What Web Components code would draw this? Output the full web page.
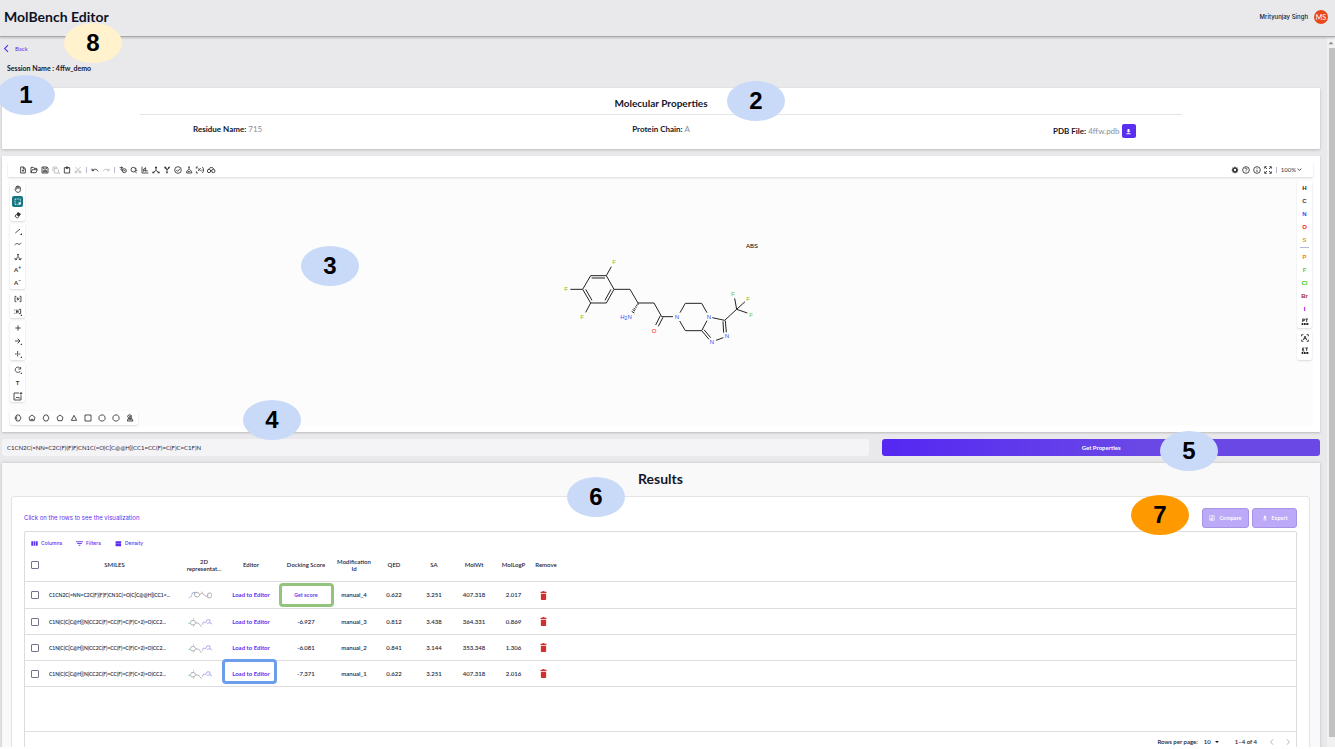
<!DOCTYPE html>
<html lang="en">
<head>
<meta charset="utf-8">
<title>MolBench Editor</title>
<style>
  html, body { margin: 0; height: 100%; }
  body { background: #fff; color: #14172b; font: 6px/8px Lato, "Open Sans", sans-serif; overflow: hidden; }
</style>
</head>
<body>
<mol-app></mol-app>
<script>
const ICONS = {
  back: '<path d="M16 3 7 12l9 9" stroke-width="3"/>',
  download: '<path class="f" d="M9 3h6v6h4l-7 7-7-7h4zM5 18h14v3H5z"/>',
  newdoc: '<path d="M5 3h9l5 5v13H5zM13 3v6h6M9 14h6M12 11v6"/>',
  open: '<path d="M3 20V4h7l2 3h8v4M3 20l4-9h15l-4 9z"/>',
  save: '<path d="M3 3h15l3 3v15H3zM8 4v5h8V4M7 20v-6h10v6M9 17h6"/>',
  copy: '<path d="M3 16V3h11v3M7 7h8l4 4v10H7z"/><path class="f" d="M24 19v5h-5z"/>',
  paste: '<path d="M4 5h16v16H4zM9 3h6v4H9z"/>',
  cut: '<path d="m4 3 14 14M20 3 6 17"/><circle cx="6" cy="18" r="3"/><circle cx="18" cy="18" r="3"/>',
  undo: '<path d="M3 8v6h6M3 14c5-6 14-6 18 2"/>',
  redo: '<path d="M21 8v6h-6M21 14C16 8 7 8 3 16"/>',
  layout: '<path d="M2 5h9M7 2l4 3-4 4M12 12h-6v-3"/><circle cx="16" cy="14" r="6"/><path d="M13 14h6"/>',
  clean: '<circle cx="10" cy="11" r="7"/><path d="m14 16 6 5M15 6l5 3M18 14h4"/>',
  calc: '<path d="M3 2v19h19M8 17V9l6-4v12M8 13h6M18 17v-5"/>',
  tri: '<path d="M12 4v9l-8 6M12 13l8 6"/><path class="f" d="M9 2h6v5H9zM1 17h6v5H1zM17 17h6v5h-6z"/>',
  stereo: '<path d="M12 20V11L4 5M12 11l8-6"/><path class="f" d="M2 2h7l4 10zM22 2h-6l-3 10zM10 17h4v5h-4z"/>',
  check: '<circle cx="12" cy="12" r="10"/><path d="m7 12 4 4 7-8"/>',
  analyse: '<path d="M12 3v7l-7 6v5h15v-5l-7-6M9 3h6M8 17h8"/>',
  recog: '<path d="M1 8V3h5M1 16v5h5M19 3c5 4 5 13 0 18M6 7l9 9M14 6l-8 9M16 12h4"/>',
  viewer: '<circle cx="6" cy="15" r="5"/><circle cx="19" cy="15" r="5"/><path d="M4 10 9 5h8l4 5M11 14h3"/>',
  gear: '<circle cx="12" cy="12" r="6" stroke-width="5"/><path d="M12 2v4M12 18v4M2 12h4M18 12h4M5 5l3 3M16 16l3 3M5 19l3-3M16 8l3-3"/>',
  help: '<circle cx="12" cy="12" r="10"/><path d="M8 9c1-4 8-3 7 1-1 2-3 2-3 4M12 17v1"/>',
  info: '<circle cx="12" cy="12" r="10"/><path d="M12 11v7M12 6v2"/>',
  full: '<path d="M2 8V2h6M16 2h6v6M22 16v6h-6M8 22H2v-6M3 3l6 6M21 3l-6 6M21 21l-6-6M3 21l6-6"/>',
  chev: '<path d="m3 8 9 8 9-8" stroke-width="4"/>',
  hand: '<path d="M6 12V6c0-2 3-2 3 0V4c0-2 3-2 3 0v1c0-2 3-2 3 0v2c0-2 4-2 4 0v8c0 5-3 7-7 7-5 0-6-3-9-8 0-3 3-3 4-1zM9 6v5M12 5v6M15 7v4"/>',
  select: '<path d="M3 3h16v16H3z" stroke-dasharray="3 2"/><path class="f" d="m13 12 9 4-4 2-2 4z"/>',
  erase: '<path class="f" d="m12 3 9 6-6 8-9-6z"/><path d="m6 11-3 5 7 5 5-4"/>',
  bond: '<path d="M4 18 18 6"/><path class="f" d="M24 18v6h-6z"/>',
  chain: '<path d="M2 15c5-5 6-5 10-3s6 0 10-3"/>',
  frag: '<path d="M12 3v8l-7 7M12 11l7 7M2 15l3 6 5-3M22 15l-3 6-5-3M9 5h6"/>',
  brackets: '<path d="M7 4H3v16h4M17 4h4v16h-4M9 8l6 8M10 8v8M15 8v4"/>',
  polymer: '<path d="M4 6H1M4 16H1M6 11h7M8 5v11M12 5v11M15 4h5v13h-5"/><path class="f" d="M24 19v5h-5z"/>',
  plus: '<path d="M12 4v16M4 12h16"/>',
  arrow: '<path d="M3 12h15M11 5l7 7-7 7"/><path class="f" d="M24 19v5h-5z"/>',
  map: '<path d="M11 3v16M3 12h5M14 12h5"/><path class="f" d="M24 19v5h-5z"/>',
  shape: '<path d="M17 5C9 0 2 7 4 14c2 6 12 7 15 1M13 9h7V3"/><path class="f" d="M24 19v5h-5z"/>',
  image: '<path d="M15 3H0v21h21V10M5 19l4-4 3 3 3-2 3 4M21 0v8M17 4h8" stroke-width="2.6"/>',
  hexa: '<path d="M8 3h8l5 9-5 9H8l-5-9zM9 7l-3 5 3 5"/>',
  hex: '<path d="M8 3h8l5 9-5 9H8l-5-9z"/>',
  pent: '<path d="m12 3 9 7-3 10H6L3 10z"/>',
  penta: '<path d="m12 3 9 7-3 10H6L3 10zM8 16h8"/>',
  triangle: '<path d="m12 4 8 15H4z"/>',
  square: '<path d="M3 3h18v18H3z"/>',
  oct: '<path d="M8 3h8l5 5v8l-5 5H8l-5-5V8z"/>',
  lib: '<path d="M7 3h8l2 5-2 4H8L5 8zM4 21l3-8h10l4 8zM9 8h6M8 17h9"/>',
  area: '<path d="M2 7V2h5M17 2h5v5M22 17v5h-5M7 22H2v-5M7 18l5-12 5 12M9 14h6"/>',
  pt: '<path d="M5 12V3h5v5H6M13 3h8M17 3v9"/><path class="f" d="M2 15h5v6H2zM9 15h5v6H9zM16 15h6v6h-6z"/>',
  et: '<path d="M10 3H5v9h5M5 7h4M13 3h8M17 3v9"/><path class="f" d="M2 15h5v6H2zM9 15h5v6H9zM16 15h6v6h-6z"/>',
  columns: '<path class="f" d="M1 4h6v16H1zM9 4h6v16H9zM17 4h6v16h-6z"/>',
  filters: '<path d="M0 6h24M4 12h16M9 18h6" stroke-width="3"/>',
  density: '<path class="f" d="M2 4h19v8H2zM2 13h19v8H2z"/>',
  compare: '<path d="M3 3h18v18H3z"/><path class="f" d="M12 1h2v22h-2zM4 19l8-10v10z"/>',
  trash: '<path class="f" d="M4 2h5l1-2h4l1 2h5v3H4zM5 7h14v15c0 1-1 2-2 2H7c-1 0-2-1-2-2z"/>',
  prev: '<path d="m15 4-7 8 7 8"/>',
  next: '<path d="m9 4 7 8-7 8"/>',
  drop: '<path class="f" d="M4 8h16l-8 8z"/>',
  scrollup: '<path class="f" d="M2 17h20L12 7z"/>'
};

function define(name, html, after) {
  const tpl = document.createElement('template');
  tpl.innerHTML = html;
  customElements.define(name, class extends HTMLElement {
    connectedCallback() {
      if (this.shadowRoot) return;
      this.attachShadow({ mode: 'open' }).appendChild(tpl.content.cloneNode(true));
      if (after) after.call(this, this.shadowRoot);
    }
  });
}

define('mol-icon', `<style>
  :host { display: inline-flex; width: 8px; height: 8px; flex: none; }
  svg { width: 100%; height: 100%; fill: none; stroke: currentColor; stroke-width: 2.6; overflow: visible; }
  .f { fill: currentColor; stroke: none; }
</style><svg viewBox="0 0 24 24" aria-hidden="true"></svg>`, function (root) {
  root.querySelector('svg').innerHTML = ICONS[this.getAttribute('name')] || '';
});

/* numbered marker that floats over the section it describes */
define('call-out', `<style>
  :host { position: absolute; z-index: 5; width: 58px; height: 40px; border-radius: 50%; background: #c9daf8;
    display: flex; align-items: center; justify-content: center; color: #000;
    font: bold 24px/28px "Liberation Sans", Arial, sans-serif; }
  :host([tone="cream"]) { background: #fff2cc; }
  :host([tone="orange"]) { background: #ff9900; }
</style><slot></slot>`);

define('app-header', `<style>
  :host { display: flex; align-items: center; justify-content: space-between; height: 37px; padding: 0 7px 2px 4px;
    background: #e9e9eb; border-bottom: 1px solid #a9a9ad; box-shadow: 0 1px 2px #0003; position: relative; z-index: 2; box-sizing: border-box; flex: none; }
  h1 { margin: 0; font-size: 14px; line-height: 18px; font-weight: 700; color: #0d1226; }
  .user { display: flex; align-items: center; gap: 6px; font: 500 6px/8px Inter, sans-serif; }
  .avatar { width: 14px; height: 14px; border-radius: 50%; background: #e64a19; color: #fff; font: 7px/8px Lato, sans-serif;
    display: flex; align-items: center; justify-content: center; }
</style><h1>MolBench Editor</h1><div class="user"><span>Mrityunjay Singh</span><span class="avatar">MS</span></div><slot></slot>`);

define('session-bar', `<style>
  :host { display: flex; flex-direction: column; align-items: flex-start; gap: 11px; padding: 7px 2px 16px; position: relative; }
  a { display: flex; align-items: center; gap: 4px; color: #5b2ff0; text-decoration: none; font-size: 6px; line-height: 8px; }
  mol-icon { width: 9px; height: 9px; }
  p { margin: 0 0 0 5px; font-weight: 700; font-size: 7px; line-height: 8px; }
</style><a href="#back"><mol-icon name="back"></mol-icon>Back</a><p>Session Name : 4ffw_demo</p><slot></slot>`);

define('mol-properties', `<style>
  :host { display: block; height: 61px; background: #fff; box-shadow: 0 1px 3px #0003; border-radius: 1px; position: relative; }
  h2 { margin: 0 auto; width: 79%; padding: 10px 0 6px; border-bottom: 1px solid #e4e4e4; text-align: center; font-size: 10px; line-height: 10px; }
  .row { display: grid; grid-template-columns: repeat(3, 1fr); padding: 7px 9px 0; font-size: 8px; line-height: 14px; text-align: center; }
  .row span { color: #8b8e99; }
  b { font-weight: 700; }
  .pdb { display: flex; align-items: center; justify-content: center; gap: 2px; padding-top: 2px; }
  button { width: 14px; height: 14px; padding: 0; border: 0; border-radius: 2px; background: #5b2ff0; color: #fff; display: flex; align-items: center; justify-content: center; }
  button mol-icon { width: 7px; height: 7px; }
</style><h2>Molecular Properties</h2>
<div class="row"><div><b>Residue Name:</b> <span>715</span></div><div><b>Protein Chain:</b> <span>A</span></div>
<div class="pdb"><b>PDB File:</b> <span>4ffw.pdb</span><button aria-label="Download PDB"><mol-icon name="download"></mol-icon></button></div></div><slot></slot>`);

/* row or column of icon buttons; "|" in the list is a divider */
define('tool-strip', `<style>
  :host { display: flex; background: #fff; }
  :host([vertical]) { flex-direction: column; width: 15px; border-radius: 2px; box-shadow: 0 1px 2px #0002; }
  button { width: 11px; height: 15px; padding: 0; border: 0; background: none; color: #333; display: flex; align-items: center; justify-content: center; font: 700 6px/8px Lato, sans-serif; flex: none; }
  :host([vertical]) button { width: 15px; height: 13px; }
  :host([wide]) button { width: 14px; height: 14px; }
  button.off { color: #b9b9b9; }
  button.on { background: #167782; color: #fff; border-radius: 2px; }
  :host([vertical]) button.on { width: 11px; height: 11px; margin: 1px 2px; }
  button mol-icon { width: 8px; height: 8px; }
  i { width: 6px; display: flex; align-items: center; justify-content: center; flex: none; }
  i::before { content: ""; width: 1px; height: 6px; background: #b4b9d6; }
  sup { font-size: 5px; line-height: 5px; vertical-align: 3px; }
</style>`, function (root) {
  for (const item of this.getAttribute('tools').split(' ')) {
    if (item === '|') { root.append(document.createElement('i')); continue; }
    const b = document.createElement('button');
    const [name, state] = item.split(':');
    if (state) b.className = state;
    if (name.startsWith('=')) {
      b.innerHTML = '<span>' + name[1] + (name.length > 2 ? '<sup>' + name[2] + '</sup>' : '') + '</span>';
    } else {
      b.setAttribute('aria-label', name);
      b.innerHTML = '<mol-icon name="' + name + '"></mol-icon>';
    }
    root.append(b);
  }
});

define('atom-palette', `<style>
  :host { display: flex; flex-direction: column; gap: 3px; }
  div { width: 15px; background: #fff; border-radius: 2px; box-shadow: 0 1px 2px #0002; display: flex; flex-direction: column; }
  div + div { padding-bottom: 3px; }
  button { height: 13px; padding: 0; border: 0; background: none; font: 700 6px/8px "Liberation Sans", sans-serif; display: flex; align-items: center; justify-content: center; color: #222; }
  hr { width: 9px; height: 1px; border: 0; background: #b4b9d6; margin: 1px auto 2px; }
</style><div>
<button>H</button><button style="color:#333">C</button><button style="color:#304ff7">N</button><button style="color:#ff0d0d">O</button><button style="color:#d9a012">S</button><hr>
<button style="color:#ff8000">P</button><button style="color:#6cbf2e">F</button><button style="color:#1fd01f">Cl</button><button style="color:#a62929">Br</button><button style="color:#9400d4">I</button>
<button aria-label="Periodic table"><mol-icon name="pt"></mol-icon></button></div>
<div><button aria-label="Any atom"><mol-icon name="area"></mol-icon></button><button aria-label="Extended table"><mol-icon name="et"></mol-icon></button></div>`);

define('molecule-drawing', `<style>
  :host { display: block; }
  svg { display: block; width: 230px; height: 130px; }
  path { fill: none; stroke: #222; stroke-width: 3; }
  text { font: 6px "Liberation Sans", sans-serif; text-anchor: middle; }
  .F { fill: #6cbf2e; } .N { fill: #304ff7; } .O { fill: #ff0d0d; }
</style><svg viewBox="-4 0 230 130" role="img" aria-label="Molecule">
<g transform="scale(.33333)">
<path d="M98 193 122 152H169L192 193 169 234H122ZM125 159H165M183 193 165 226M126 226 107 193M169 152 184 125M98 193H61M122 234 107 262M192 193H240L264 234H312L335 275H369M331 272 317 300M339 277 325 304M390 263 406 235H455L471 263M389 288 406 317H455L471 287M455 317 477 343M462 314 482 338M498 346 520 338M487 278 524 286M519 289 521 323M526 287 529 322M524 286 560 253M560 253 554 220M560 253 585 230M560 253 592 264"/>
<path d="M264 234 264 240M262 242 258 240M260 247 255 245M257 253 251 250M255 258 248 254M253 264 245 259" stroke-width="2.5"/>
</g>
<g><text class="F" x="64" y="39">F</text><text class="F" x="16" y="66">F</text><text class="F" x="32" y="94">F</text>
<text class="N" x="76" y="94">H<tspan font-size="5" dy="1">2</tspan><tspan dy="-1">N</tspan></text><text class="O" x="104" y="108">O</text>
<text class="N" x="127" y="94">N</text><text class="N" x="159" y="94">N</text><text class="N" x="162" y="119">N</text><text class="N" x="177" y="113">N</text>
<text class="F" x="183" y="71">F</text><text class="F" x="198" y="76">F</text><text class="F" x="201" y="92">F</text><text x="202" y="23">ABS</text></g></svg>`);

define('mol-editor', `<style>
  :host { display: block; margin-top: 7px; padding: 6px 7px 6px 6px; background: #fff; box-shadow: 0 1px 2px #0003; position: relative; }
  .stage { background: #fcfcfc; display: flex; flex-direction: column; height: 264px; }
  .top { display: flex; justify-content: space-between; background: #fff; box-shadow: 0 1px 2px #0002; padding: 0 11px 0 9px; height: 15px; align-items: center; }
  .right { display: flex; align-items: center; }
  .zoom { border: 0; background: none; padding: 0; font: 6px/8px Lato, sans-serif; color: #333; display: flex; align-items: center; gap: 1px; margin-left: 1px; }
  .zoom mol-icon { width: 5px; height: 5px; }
  .mid { display: flex; justify-content: space-between; align-items: flex-start; flex: 1; padding: 5px 1px 0 2px; }
  .rail { display: flex; flex-direction: column; gap: 3px; }
  molecule-drawing { margin-top: 43px; }
  atom-palette { margin-top: -1px; }
  .bottom { display: flex; padding: 0 2px 1px; }
  .bottom tool-strip { padding: 0 1px; border-radius: 2px; box-shadow: 0 1px 2px #0002; }
</style><div class="stage">
<div class="top"><tool-strip tools="newdoc open save copy:off paste cut:off | undo redo:off | layout clean calc tri stereo check analyse recog viewer"></tool-strip>
<div class="right"><tool-strip tools="gear help info full |"></tool-strip><button class="zoom">100%<mol-icon name="chev"></mol-icon></button></div></div>
<div class="mid"><div class="rail">
<tool-strip vertical tools="hand select:on erase"></tool-strip>
<tool-strip vertical tools="bond chain frag =A+ =A−"></tool-strip>
<tool-strip vertical tools="brackets polymer"></tool-strip>
<tool-strip vertical tools="plus arrow map"></tool-strip>
<tool-strip vertical tools="shape =T image"></tool-strip></div>
<molecule-drawing></molecule-drawing><atom-palette></atom-palette></div>
<div class="bottom"><tool-strip wide tools="hexa penta hex pent triangle square oct oct lib"></tool-strip></div>
</div><slot></slot>`);

define('smiles-form', `<style>
  :host { display: grid; grid-template-columns: 868fr 438fr; gap: 13px; margin-top: 7px; position: relative; }
  input { min-width: 0; height: 17px; box-sizing: border-box; border: 0; border-radius: 3px; background: #f4f4f7; padding: 0 5px; font: 6px/8px Lato, sans-serif; color: #22253a; }
  button { height: 17px; border: 0; border-radius: 3px; background: linear-gradient(90deg, #5528f2, #6a48e6 60%); color: #fff; font: 700 6px/8px Lato, sans-serif; padding: 0; }
</style><input aria-label="SMILES" value="C1CN2C(=NN=C2C(F)(F)F)CN1C(=O)C[C@@H](CC1=CC(F)=C(F)C=C1F)N"><button>Get Properties</button><slot></slot>`);

const THUMBS = [
  '<path stroke="#8fa2d8" d="m5 9 1-5 5-1M5 9l-4 2"/><path stroke="#8f8f98" d="m9 4 5-1 3 4-3 3-4-1zM17 6l3-2 3 3M23 7l3 2 2-2M28 5l4-1 2 3-2 4h-4z"/><path stroke="#e09090" d="m19 2 2 2"/>',
  '<path stroke="#8f8f98" d="M5 5h4l2 3-2 3H5L3 8zM11 8l4 1 3 3"/><path stroke="#7ed3bd" d="M8 1v3M0 9h3M8 11v3"/><path stroke="#e08080" d="m18 12 1 2"/><path stroke="#8f8fe8" d="m20 11 2-4 3 1 2-4 4 0 0 4-4 1M31 8l3 2"/>'
];

define('results-grid', `<style>
  :host { display: block; border: 1px solid #dcdcdf; border-radius: 2px; background: #fff; }
  .tools { display: flex; gap: 14px; padding: 7px 6px 0; height: 16px; box-sizing: border-box; }
  .tools button { border: 0; background: none; padding: 0; display: flex; align-items: center; gap: 3px; height: 8px; color: #5b2ff0; font: 500 5px/8px Inter, sans-serif; }
  .tools mol-icon { width: 7px; height: 7px; }
  table { width: 100%; border-collapse: separate; border-spacing: 0; table-layout: fixed; }
  th { height: 33px; padding: 0; font: 600 6px/7px Lato, sans-serif; border-bottom: 1px solid #dedee0; }
  td { height: 25px; padding: 0; text-align: center; border-bottom: 1px solid #dedee0; position: relative; font: 600 6px/8px Lato, sans-serif; }
  tbody tr:first-child td { height: 26px; }
  tbody, thead { color: #22253a; }
  td.smiles { text-align: left; padding-left: 4px; font-size: 5px; white-space: nowrap; }
  input { appearance: none; width: 8px; height: 8px; border: 1px solid #77728f; border-radius: 1px; margin: 0; display: block; margin-left: 6px; box-sizing: border-box; }
  td button, td a { border: 0; background: none; padding: 0; color: #5b2ff0; font: 700 6px/8px Lato, sans-serif; text-decoration: none; }
  td button { font: 600 5px/8px Inter, sans-serif; }
  td svg { display: block; width: 24px; height: 10px; margin-left: 4px; fill: none; }
  td.del { text-align: left; padding-left: 6px; }
  td.del button { color: #d32f2f; display: block; height: 9px; }
  td.del mol-icon { width: 9px; height: 9px; }
  .mark { position: absolute; inset: 1px 0 1px 1px; border: 3px solid #93c47d; border-radius: 4px; }
  .blue { border-color: #6d9eeb; inset: -2px 1px 2px -2px; }
  .foot { margin-top: 44px; border-top: 1px solid #dedee0; height: 19px; display: flex; align-items: center; justify-content: flex-end; padding-right: 4px; font: 600 6px/8px Lato, sans-serif; }
  .foot label { display: flex; align-items: center; margin-right: 15px; }
  .foot select { appearance: none; border: 0; background: none; padding: 0; margin: 0 0 0 6px; font: inherit; color: inherit; width: 10px; }
  .foot label mol-icon { width: 6px; height: 6px; }
  .foot button { border: 0; background: none; padding: 0; color: #aaa; width: 8px; height: 8px; margin-left: 8px; display: flex; }
  .foot button:first-of-type { margin-left: 11px; }
</style>
<div class="tools"><button><mol-icon name="columns"></mol-icon>Columns</button><button><mol-icon name="filters"></mol-icon>Filters</button><button><mol-icon name="density"></mol-icon>Density</button></div>
<table><colgroup><col style="width:20px"><col style="width:139px"><col style="width:40px"><col style="width:54px"><col style="width:56px"><col style="width:40px"><col style="width:40px"><col style="width:40px"><col style="width:40px"><col style="width:39px"><col style="width:26px"><col></colgroup>
<thead><tr><th><input type="checkbox" aria-label="Select all"></th><th>SMILES</th><th>2D<br>representat...</th><th>Editor</th><th>Docking Score</th><th>Modification<br>Id</th><th>QED</th><th>SA</th><th>MolWt</th><th>MolLogP</th><th>Remove</th><th></th></tr></thead><tbody></tbody></table>
<div class="foot"><label>Rows per page: <select><option>10</option></select><mol-icon name="drop"></mol-icon></label><span>1–4 of 4</span>
<button aria-label="Previous page"><mol-icon name="prev"></mol-icon></button><button aria-label="Next page"><mol-icon name="next"></mol-icon></button></div>`, function (root) {
  const a = 'C1CN2C(=NN=C2C(F)(F)F)CN1C(=O)C[C@@H](CC1=...';
  const b = 'C1N(C(C[C@H](N)CC2C(F)=CC(F)=C(F)C=2)=O)CC2...';
  const rows = [
    [a, '', 'manual_4', '0.622', '3.251', '407.318', '2.017'],
    [b, '-6.927', 'manual_3', '0.812', '3.438', '364.331', '0.869'],
    [b, '-6.081', 'manual_2', '0.841', '3.144', '353.348', '1.306'],
    [b, '-7.371', 'manual_1', '0.622', '3.251', '407.318', '2.016']
  ];
  root.querySelector('tbody').innerHTML = rows.map((r, i) => `<tr>
    <td><input type="checkbox" aria-label="Select ${r[2]}"></td><td class="smiles">${r[0]}</td>
    <td><svg viewBox="0 0 34 14" aria-hidden="true">${THUMBS[i ? 1 : 0]}</svg></td>
    <td><a href="#load">Load to Editor</a>${i === 3 ? '<span class="mark blue"></span>' : ''}</td>
    <td>${i ? r[1] : '<button>Get score</button><span class="mark"></span>'}</td>
    ${r.slice(2).map(v => '<td>' + v + '</td>').join('')}
    <td class="del"><button aria-label="Remove ${r[2]}"><mol-icon name="trash"></mol-icon></button></td><td></td></tr>`).join('');
});

define('results-panel', `<style>
  :host { display: block; margin-top: 7px; background: #f9f9f9; box-shadow: 0 0 3px #0003; position: relative; padding: 8px 10px 0 9px; }
  h2 { margin: 0; text-align: center; font-size: 14px; line-height: 16px; }
  .panel { margin-top: 9px; border: 1px solid #e4e4e6; border-radius: 3px; background: #fff; padding: 11px 12px 16px; }
  .bar { display: flex; align-items: center; justify-content: space-between; margin-bottom: 3px; }
  .bar p { margin: 0; color: #5b2ff0; font: 6px/8px Inter, sans-serif; }
  .actions { display: flex; gap: 3px; }
  .actions button { height: 20px; width: 47px; padding: 0; border: 1px solid #a894e4; border-radius: 3px; background: #bcaaf8; color: #fff; font: 600 5px/8px Inter, sans-serif; display: flex; align-items: center; justify-content: center; gap: 4px; }
  .actions button + button { width: 45px; }
  .actions mol-icon { width: 6px; height: 6px; }
</style><h2>Results</h2><div class="panel"><div class="bar"><p>Click on the rows to see the visualization</p>
<div class="actions"><button><mol-icon name="compare"></mol-icon>Compare</button><button><mol-icon name="download"></mol-icon>Export</button></div></div>
<results-grid></results-grid></div><slot></slot>`);

define('scroll-track', `<style>
  :host { display: flex; flex-direction: column; align-items: center; width: 8px; background: #f1f1f1; flex: none; color: #8a8a8a; }
  mol-icon { width: 6px; height: 6px; margin: 3px 0 2px; }
  div { width: 6px; flex: 1; margin-bottom: 10px; background: #c1c1c1; align-self: flex-end; }
</style><mol-icon name="scrollup"></mol-icon><div></div>`);

define('mol-app', `<style>
  :host { display: flex; flex-direction: column; height: calc(100vh - 2px); background: #e9e9eb; overflow: hidden; }
  .body { display: flex; flex: 1; min-height: 0; }
  main { flex: 1; min-width: 0; overflow: hidden; }
  .stack { padding: 0 7px 0 2px; }
</style>
<app-header><call-out tone="cream" style="left:64px;top:23px">8</call-out></app-header>
<div class="body"><main><session-bar></session-bar><div class="stack">
<mol-properties><call-out style="left:-5px;top:-13px">1</call-out><call-out style="left:55%;top:-7px">2</call-out></mol-properties>
<mol-editor><call-out style="left:299px;top:90px">3</call-out><call-out style="left:241px;top:244px">4</call-out></mol-editor>
<smiles-form><call-out style="right:102px;top:-8px">5</call-out></smiles-form>
<results-panel><call-out style="left:calc(50% - 94px);top:14px">6</call-out><call-out tone="orange" style="right:131px;top:32px">7</call-out></results-panel>
</div></main><scroll-track></scroll-track></div>`);
</script>
</body>
</html>
